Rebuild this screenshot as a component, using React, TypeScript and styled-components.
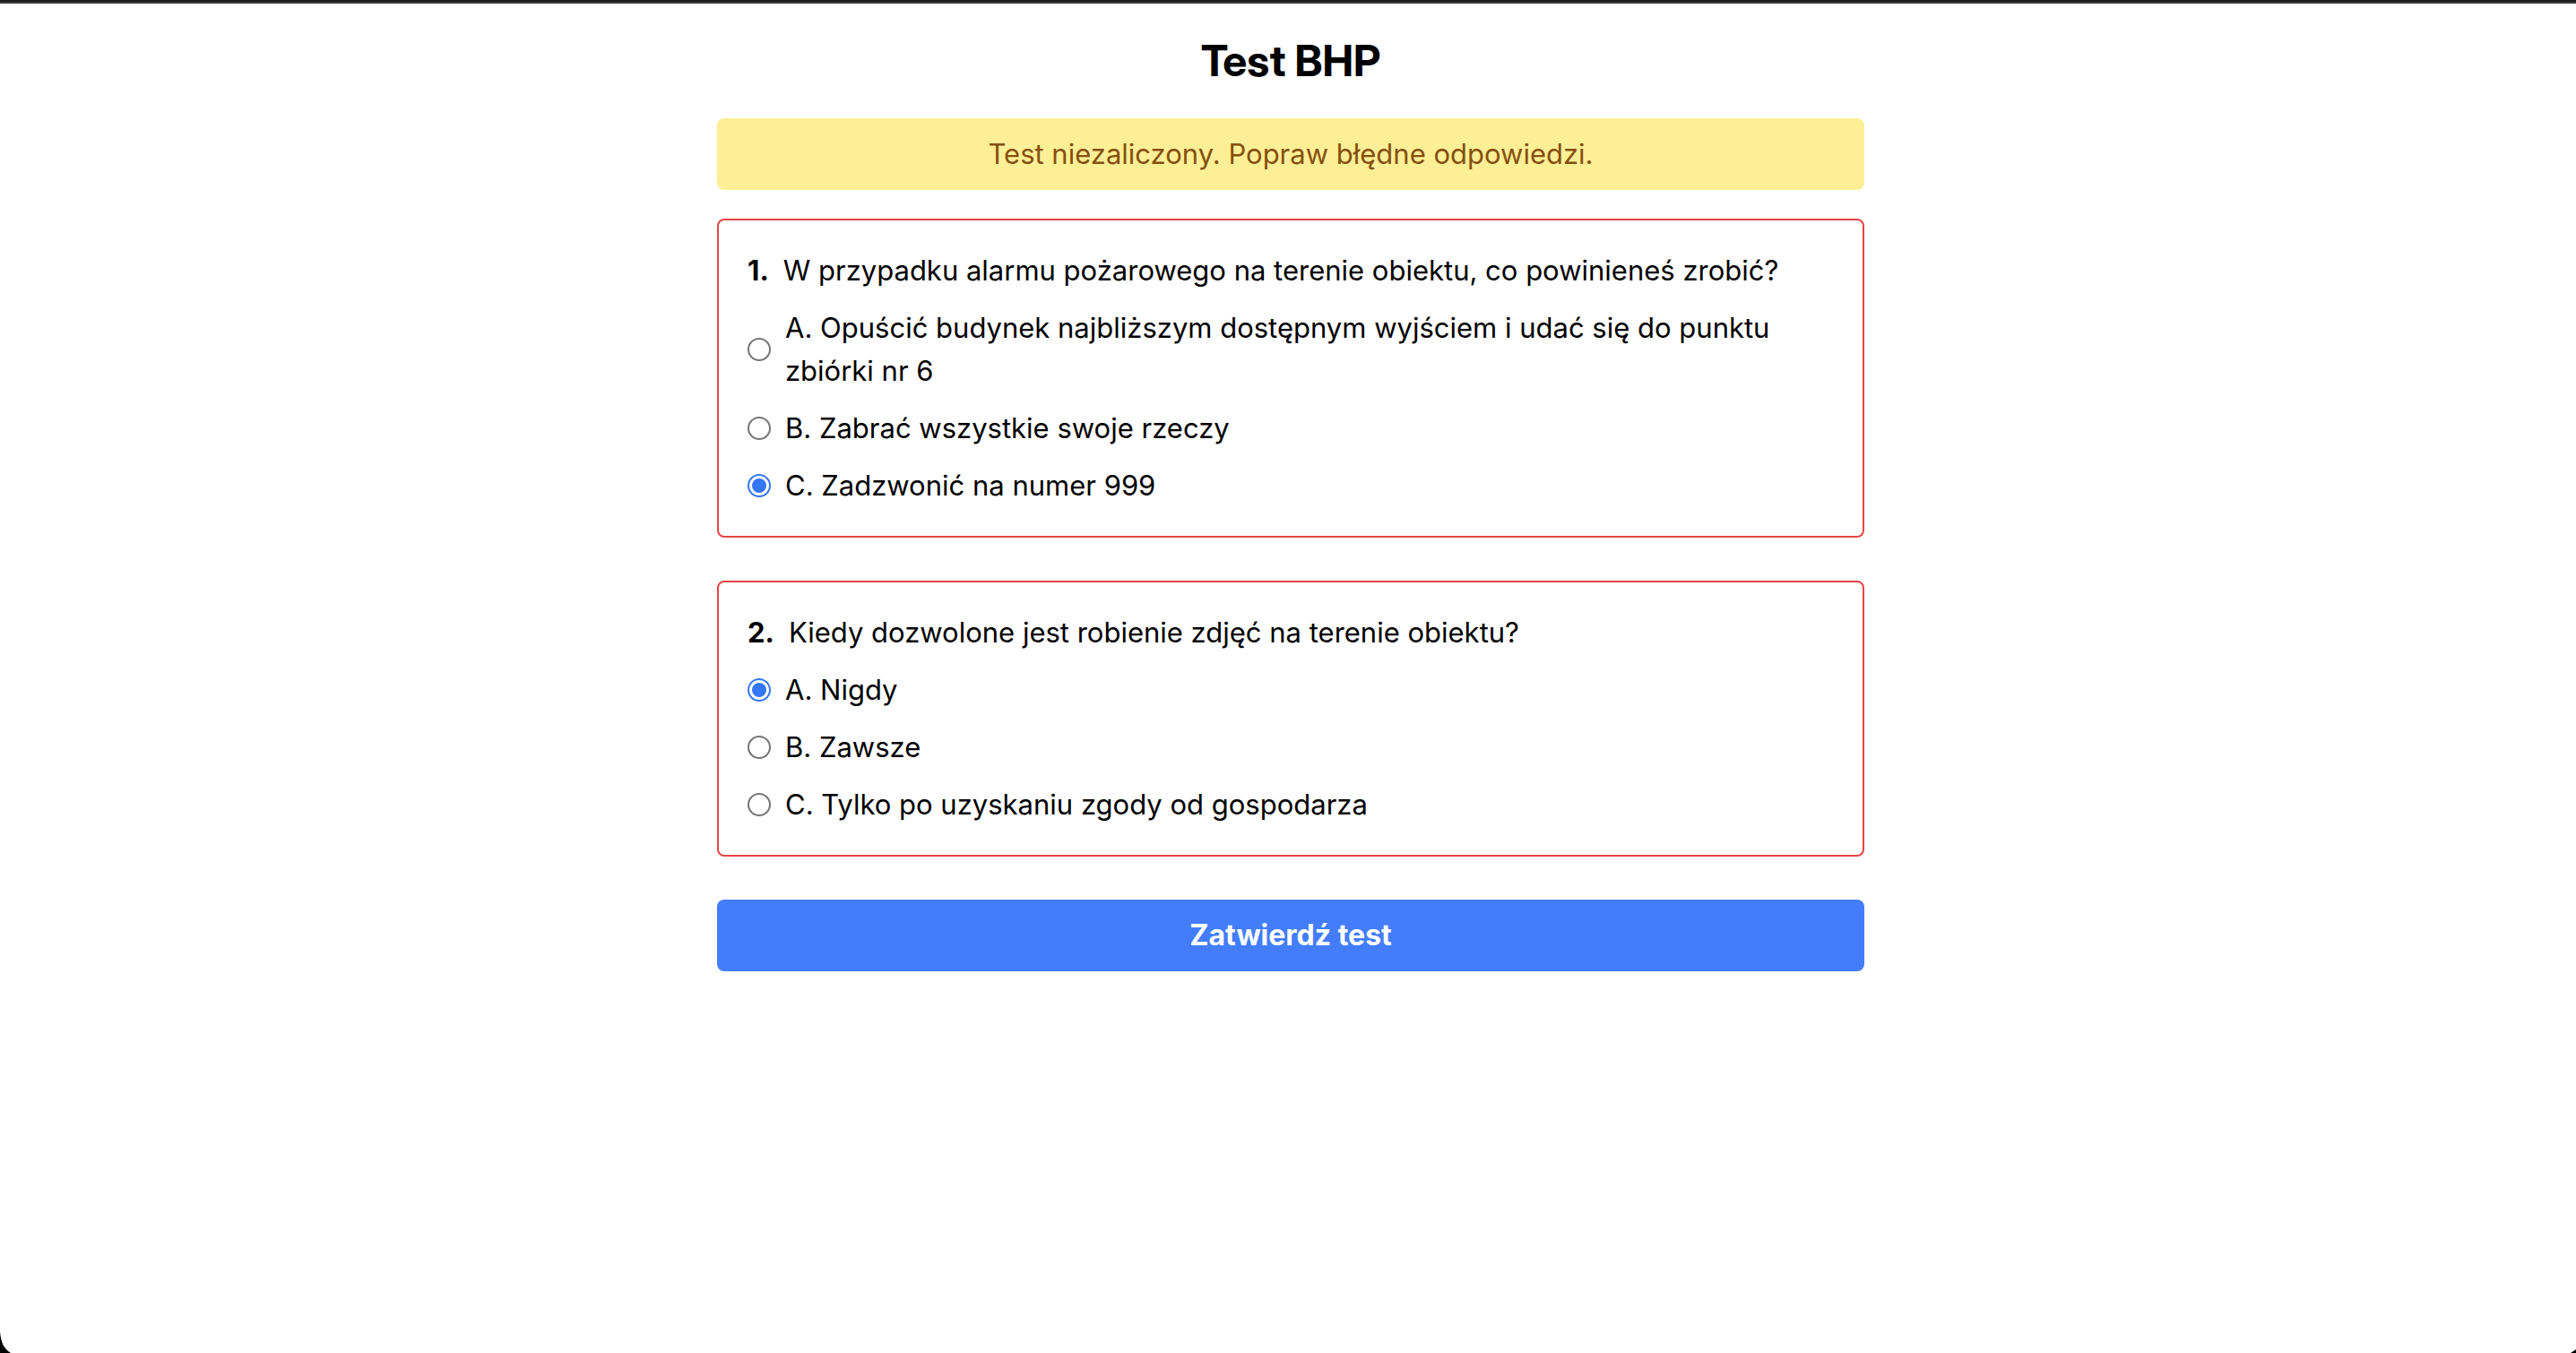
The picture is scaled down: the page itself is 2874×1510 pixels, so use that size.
import React, { useState } from "react";
import styled, { createGlobalStyle } from "styled-components";

const GlobalStyle = createGlobalStyle`
  *, *::before, *::after { box-sizing: border-box; }
  body {
    margin: 0;
    background: #fff;
    color: #000;
    font-family: Inter, "Liberation Sans", sans-serif;
    font-size: 31px;
    line-height: 48px;
  }
`;

const TopEdge = styled.div`
  height: 4px;
  border-top: 2px solid #1e1e1e;
  background: #3a3a3a;
`;

const Page = styled.main`
  padding: 32px 0 32px 6px;
`;

const Column = styled.div`
  max-width: 1280px;
  margin: 0 auto;
`;

const Title = styled.h1`
  margin: 0 0 32px;
  font-family: "Inter Display", Inter, "Liberation Sans", sans-serif;
  font-size: 48px;
  line-height: 64px;
  font-weight: 700;
  text-align: center;
`;

const Notice = styled.p`
  margin: 0 0 32px;
  padding: 16px;
  border-radius: 8px;
  background: #fdef95;
  color: #85500f;
  text-align: center;
`;

const Form = styled.form`
  display: flex;
  flex-direction: column;
  gap: 48px;
`;

const Card = styled.div`
  display: flex;
  flex-direction: column;
  gap: 16px;
  padding: 32px;
  border: 2px solid #e54545;
  border-radius: 8px;
`;

const Prompt = styled.div`
  display: flex;
  gap: 16px;
`;

const Option = styled.label`
  display: flex;
  align-items: center;
  gap: 16px;
`;

const Radio = styled.input`
  appearance: none;
  flex: none;
  display: grid;
  place-items: center;
  width: 26px;
  height: 26px;
  margin: 0;
  border: 2px solid #767676;
  border-radius: 50%;
  background: #fff;

  &:checked {
    border-color: #3576f6;
  }

  &:checked::before {
    content: "";
    width: 16px;
    height: 16px;
    border-radius: 50%;
    background: #3576f6;
  }
`;

const Submit = styled.button`
  width: 100%;
  padding: 16px;
  border: 0;
  border-radius: 8px;
  background: #437dfc;
  color: #fff;
  font: inherit;
  font-size: 32px;
  font-weight: 700;
`;

const Corner = styled.svg<{ $side: "left" | "right" }>`
  position: fixed;
  bottom: 0;
  ${({ $side }) => $side}: 0;
  display: block;
`;

type Question = { text: string; options: string[]; chosen: number };

const questions: Question[] = [
  {
    text: "W przypadku alarmu pożarowego na terenie obiektu, co powinieneś zrobić?",
    options: [
      "A. Opuścić budynek najbliższym dostępnym wyjściem i udać się do punktu zbiórki nr 6",
      "B. Zabrać wszystkie swoje rzeczy",
      "C. Zadzwonić na numer 999",
    ],
    chosen: 2,
  },
  {
    text: "Kiedy dozwolone jest robienie zdjęć na terenie obiektu?",
    options: ["A. Nigdy", "B. Zawsze", "C. Tylko po uzyskaniu zgody od gospodarza"],
    chosen: 0,
  },
];

export default function App() {
  const [answers, setAnswers] = useState(questions.map((q) => q.chosen));

  const choose = (question: number, option: number) =>
    setAnswers((prev) => prev.map((a, i) => (i === question ? option : a)));

  return (
    <>
      <GlobalStyle />
      <TopEdge />
      <Page>
        <Column>
          <Title>Test BHP</Title>
          <Notice role="status">Test niezaliczony. Popraw błędne odpowiedzi.</Notice>
          <Form onSubmit={(e) => e.preventDefault()}>
            {questions.map((q, qi) => (
              <Card key={qi} role="radiogroup" aria-labelledby={`question-${qi}`}>
                <Prompt id={`question-${qi}`}>
                  <strong>{qi + 1}.</strong>
                  <span>{q.text}</span>
                </Prompt>
                {q.options.map((option, oi) => (
                  <Option key={oi} htmlFor={`answer-${qi}-${oi}`}>
                    <Radio
                      type="radio"
                      id={`answer-${qi}-${oi}`}
                      name={`answer-${qi}`}
                      checked={answers[qi] === oi}
                      onChange={() => choose(qi, oi)}
                    />
                    <span>{option}</span>
                  </Option>
                ))}
              </Card>
            ))}
            <Submit type="submit">Zatwierdź test</Submit>
          </Form>
        </Column>
      </Page>
      <Corner $side="left" width="12" height="24" viewBox="0 0 12 24" aria-hidden="true">
        <path d="M0 0C1 12 4 19 12 24H0Z" fill="#000" />
      </Corner>
      <Corner $side="right" width="6" height="4" viewBox="0 0 6 4" aria-hidden="true">
        <path d="M6 0L0 4H6Z" fill="#000" />
      </Corner>
    </>
  );
}
